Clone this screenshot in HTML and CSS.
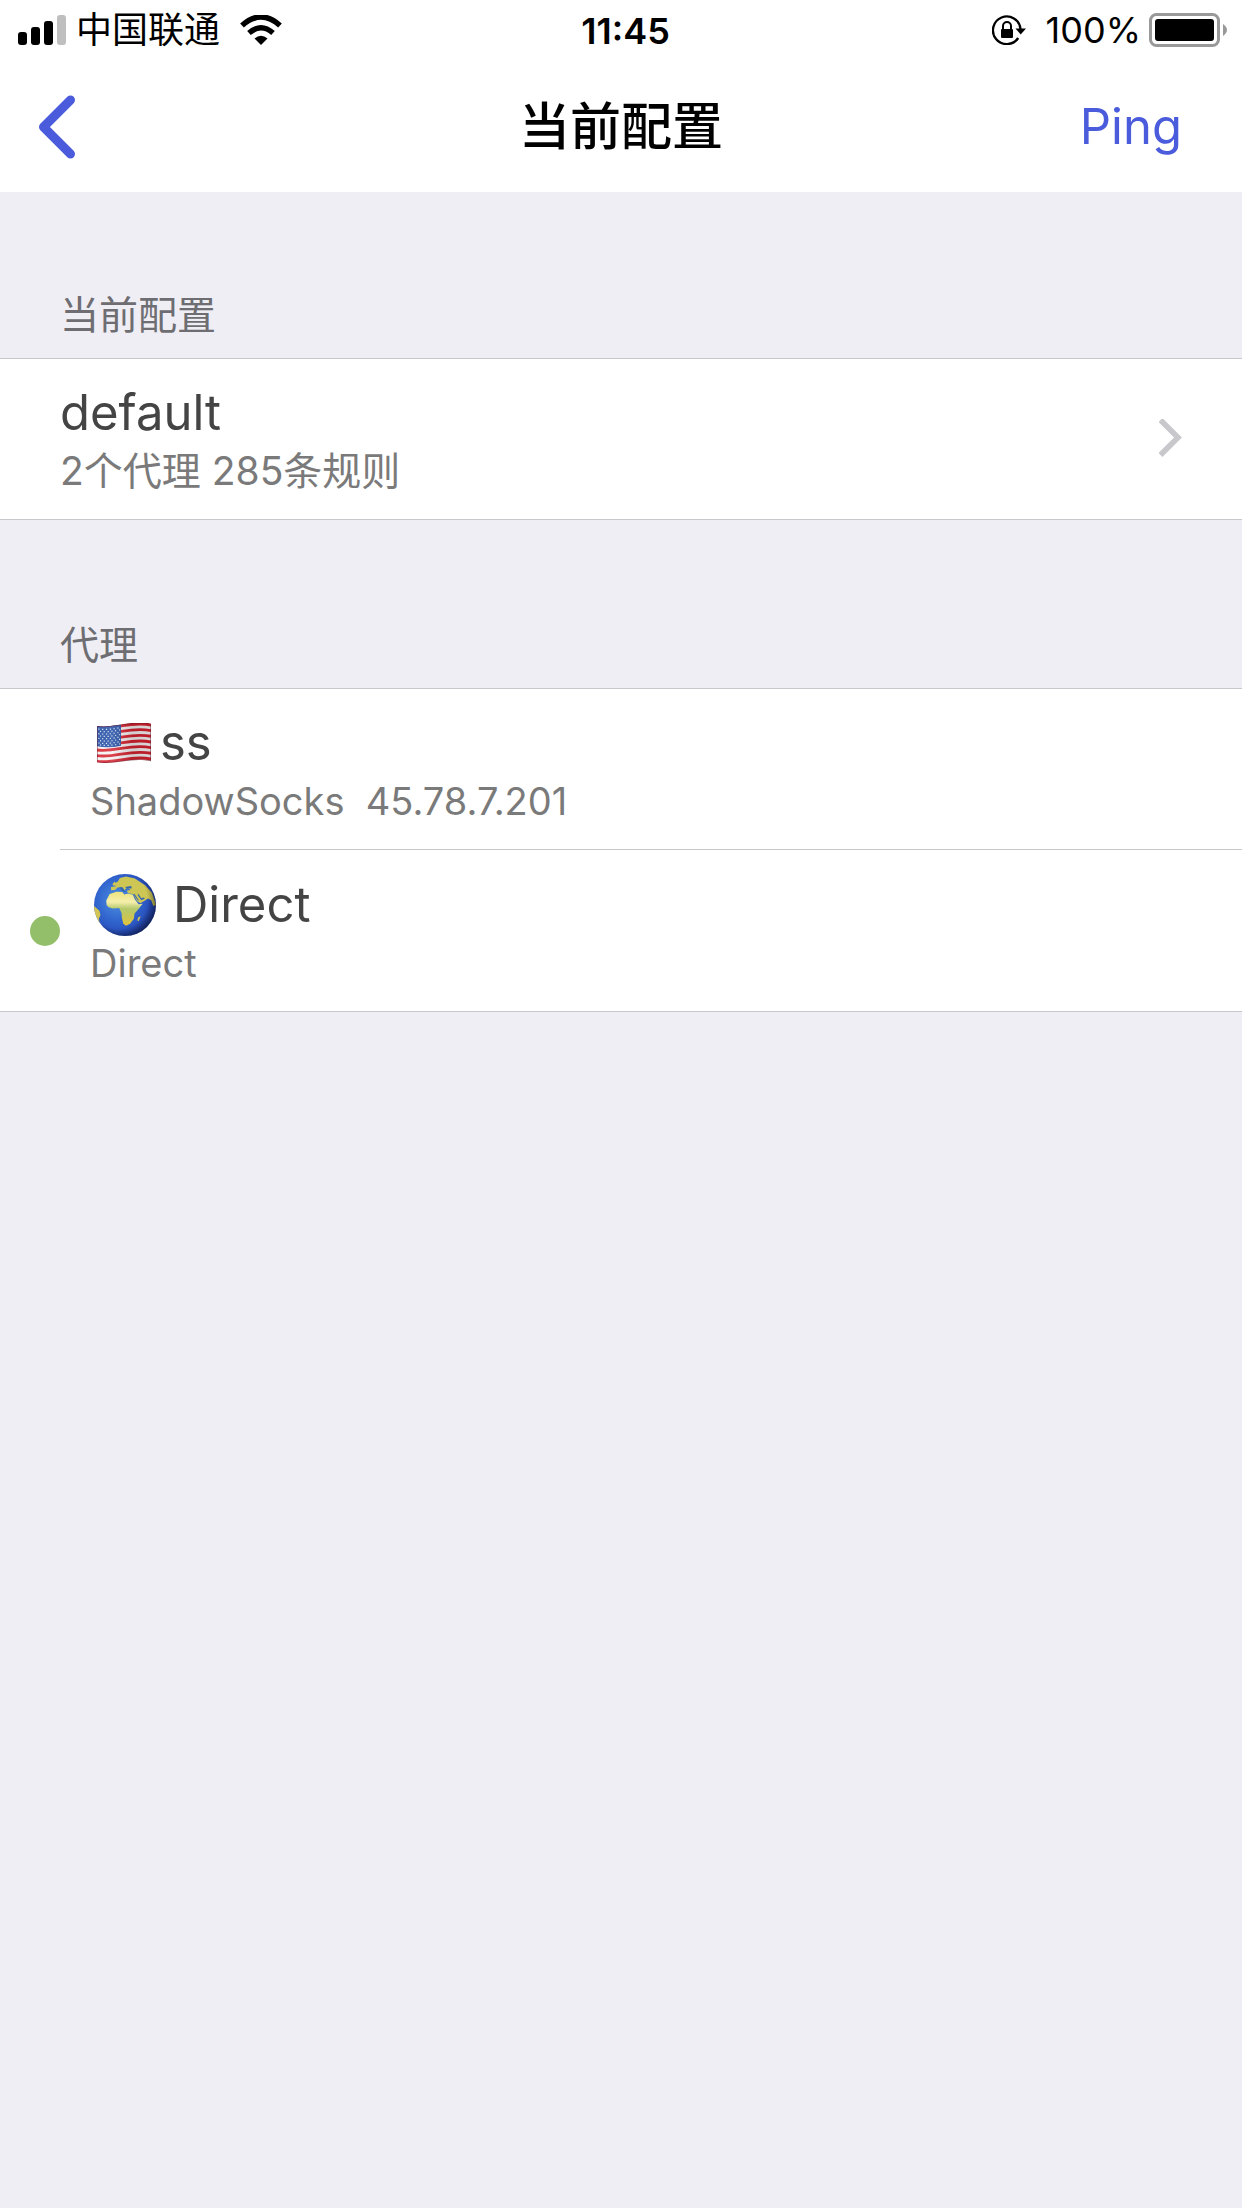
FILE: index.html
```html
<!DOCTYPE html>
<html lang="zh-CN">
<head>
  <meta charset="utf-8">
  <meta name="viewport" content="width=device-width, initial-scale=1">
  <title>当前配置</title>
  <link rel="stylesheet" href="styles.css">
</head>
<body>
  <header class="top">
    <div class="status">
      <div class="status-side">
        <svg class="signal" width="48" height="30" viewBox="0 0 48 30" aria-hidden="true">
          <rect x="0" y="17" width="9" height="13" rx="3"/>
          <rect x="13" y="12" width="9" height="18" rx="3"/>
          <rect x="26" y="6" width="9" height="24" rx="3"/>
          <rect x="39" y="0" width="9" height="30" rx="3" fill="#bfbfbf"/>
        </svg>
        <span class="carrier">中国联通</span>
        <svg class="wifi" width="42" height="30" viewBox="0 0 42 30" aria-hidden="true">
          <path d="M2 10.500Q21-6.500 40 10.500" fill="none" stroke="#000" stroke-width="5.500"/>
          <path d="M9 18Q21 7.500 33 18" fill="none" stroke="#000" stroke-width="5.500"/>
          <path d="M14.500 23.500Q21 18 27.500 23.500L21 30z"/>
        </svg>
      </div>
      <time class="clock">11:45</time>
      <div class="status-side status-right">
        <svg class="lock" width="34" height="30" viewBox="0 0 34 30" aria-hidden="true">
          <path d="M26.200 23A13.800 13.800 0 1 1 28.500 14" fill="none" stroke="#000" stroke-width="2.300"/>
          <path d="M23.500 13.500H34L28.700 19.500z"/>
          <rect x="9" y="14" width="12" height="9" rx="1"/>
          <path d="M11 15V11a4 4 0 0 1 8 0v4" fill="none" stroke="#000" stroke-width="2"/>
        </svg>
        <span>100%</span>
        <svg class="battery" width="78" height="34" viewBox="0 0 78 34" aria-hidden="true">
          <rect x="1.500" y="1.500" width="68" height="31" rx="6" fill="none" stroke="#999" stroke-width="3"/>
          <rect x="6" y="6" width="59" height="22" rx="3"/>
          <path d="M74 11q8 6 0 12z" fill="#999"/>
        </svg>
      </div>
    </div>
    <nav class="nav">
      <button class="back" type="button" aria-label="返回">
        <svg width="38" height="64" viewBox="0 0 38 64" aria-hidden="true">
          <path d="M32.500 5L5.500 32L32.500 59" fill="none" stroke="#4a5bdb" stroke-width="9" stroke-linecap="round" stroke-linejoin="round"/>
        </svg>
      </button>
      <h1 class="title">当前配置</h1>
      <button class="ping" type="button">Ping</button>
    </nav>
  </header>

  <main>
    <section class="group">
      <h2 class="heading">当前配置</h2>
      <div class="list">
        <a class="row config" href="#default">
          <span class="text">
            <span class="name">default</span>
            <span class="detail">2个代理 285条规则</span>
          </span>
          <svg width="23" height="40" viewBox="0 0 23 40" aria-hidden="true">
            <path d="M1.500 1L19 18.500L1.500 36" fill="none" stroke="#c7c7cc" stroke-width="5.500"/>
          </svg>
        </a>
      </div>
    </section>

    <section class="group">
      <h2 class="heading">代理</h2>
      <div class="list">
        <label class="row proxy">
          <input class="dot" type="radio" name="proxy">
          <span class="text">
            <span class="name">
              <svg class="flag" width="60" height="40" viewBox="0 0 180 120" aria-hidden="true">
                <defs>
                  <clipPath id="wave"><path d="M9 9C65 16 110-11 171 2V115C110 102 65 127 9 118z"/></clipPath>
                  <linearGradient id="fold">
                    <stop offset="0" stop-color="#fff" stop-opacity=".1"/>
                    <stop offset=".3" stop-color="#fff" stop-opacity=".15"/>
                    <stop offset=".65" stop-color="#000" stop-opacity=".15"/>
                    <stop offset="1" stop-color="#000" stop-opacity=".1"/>
                  </linearGradient>
                </defs>
                <g clip-path="url(#wave)">
                  <path d="M0 0H180V120H0z" fill="#f5f1f2"/>
                  <g fill="none" stroke="#d5222f" stroke-width="8.600">
                    <path d="M9 13C65 20 110-7 171 6"/>
                    <path d="M9 30C65 37 110 10 171 23"/>
                    <path d="M9 47C65 54 110 27 171 40"/>
                    <path d="M9 64C65 71 110 44 171 57"/>
                    <path d="M9 81C65 88 110 61 171 74"/>
                    <path d="M9 98C65 105 110 78 171 91"/>
                    <path d="M9 115C65 122 110 95 171 108"/>
                  </g>
                  <path d="M9 5H81V68Q45 76 9 70z" fill="#244fa5"/>
                  <g fill="none" stroke="#d9e2f5" stroke-width="3.500" stroke-dasharray="3.500 8">
                    <path d="M13 18Q45 22 80 13"/>
                    <path d="M18 25Q45 29 80 20"/>
                    <path d="M13 32Q45 36 80 27"/>
                    <path d="M18 39Q45 43 80 34"/>
                    <path d="M13 46Q45 50 80 41"/>
                    <path d="M18 53Q45 57 80 48"/>
                    <path d="M13 60Q45 64 80 55"/>
                    <path d="M18 66Q45 70 80 62"/>
                  </g>
                  <path d="M0 0H180V120H0z" fill="url(#fold)"/>
                  <path d="M9 9C65 16 110-11 171 2V115C110 102 65 127 9 118z" fill="none" stroke="#631421" stroke-opacity=".5" stroke-width="5"/>
                </g>
              </svg>
              <span>ss</span>
            </span>
            <span class="detail">ShadowSocks&nbsp; 45.78.7.201</span>
          </span>
        </label>
        <label class="row proxy">
          <input class="dot" type="radio" name="proxy" checked>
          <span class="text">
            <span class="name name-globe">
              <svg class="globe" width="62" height="62" viewBox="0 0 182 182" aria-hidden="true">
                <defs>
                  <radialGradient id="sea" cx=".38" cy=".42" r=".65">
                    <stop offset="0" stop-color="#4d91e0"/>
                    <stop offset=".5" stop-color="#3267cf"/>
                    <stop offset="1" stop-color="#2240b0"/>
                  </radialGradient>
                  <radialGradient id="shade" cx=".4" cy=".42" r=".66">
                    <stop offset=".7" stop-color="#000" stop-opacity="0"/>
                    <stop offset="1" stop-color="#000" stop-opacity=".6"/>
                  </radialGradient>
                  <linearGradient id="land" x1="0" y1="0" x2="0" y2="1">
                    <stop offset="0" stop-color="#ece27c"/>
                    <stop offset=".3" stop-color="#f5efad"/>
                    <stop offset=".5" stop-color="#b4c96c"/>
                    <stop offset="1" stop-color="#e0c23c"/>
                  </linearGradient>
                  <clipPath id="ball"><circle cx="91" cy="91" r="91"/></clipPath>
                </defs>
                <g clip-path="url(#ball)">
                  <path d="M0 0H182V182H0z" fill="url(#sea)"/>
                  <path d="M50 48V38L64 36L58 29L70 22L76 12L94 7L120 13L150 33L170 55L182 91L174 94L168 77L158 72L151 77L136 86L126 79L116 60L100 56L96 49L108 46L96 41L86 50L80 43L70 39L62 47z" fill="#cdc655"/>
                  <path d="M37 91L36 78L46 59L66 52L83 53L89 60L100 57L114 61L120 75L131 89L143 87L129 105L119 116L117 131L106 146L94 152L86 146L82 130L81 115L74 100L54 101L42 97z" fill="url(#land)"/>
                  <path d="M54 29L61 22L66 30L58 35zM0 94L16 108L19 120L14 132L18 149L9 148L0 115zM137 124L131 139L127 136L130 127z" fill="#d3c553"/>
                  <path d="M73 38L83 50L92 52L84 39M91 38L109 35L111 42L98 43zM116 60L129 78L132 78L119 59zM130 58L128 62L139 77L150 72L145 69L139 71z" fill="#3466ad"/>
                  <path d="M0 0H182V182H0z" fill="url(#shade)"/>
                </g>
              </svg>
              <span>Direct</span>
            </span>
            <span class="detail">Direct</span>
          </span>
        </label>
      </div>
    </section>
  </main>
</body>
</html>
```
FILE: styles.css
```css
* {
  box-sizing: border-box;
}

body {
  margin: 0;
  min-height: 100vh;
  background: #efeef4;
  color: #444;
  font-family: Inter, "Noto Sans CJK SC", sans-serif;
}

svg {
  display: block;
  flex: none;
}

button {
  padding: 0;
  border: 0;
  background: none;
  font: inherit;
}

.top {
  background: #fff;
  color: #000;
}

.status {
  display: flex;
  align-items: center;
  height: 60px;
  padding: 0 15px 0 18px;
  font-size: 36px;
  line-height: 62px;
}

.status-side {
  display: flex;
  flex: 1;
  align-items: center;
}

.status-right {
  justify-content: flex-end;
}

.carrier {
  margin: 0 20px 0 10px;
}

.clock {
  padding: 2px 0 0 6px;
  font-weight: 600;
}

.lock {
  margin-right: 20px;
}

.battery {
  margin-left: 8px;
}

.nav {
  display: grid;
  grid-template-columns: 1fr auto 1fr;
  align-items: center;
  height: 132px;
  padding: 2px 38px 0;
}

.back {
  justify-self: start;
}

.title {
  margin: 0;
  font-size: 51px;
  font-weight: 500;
  line-height: 72px;
}

.ping {
  justify-self: end;
  padding-right: 22px;
  color: #4a5bdb;
  font-size: 49px;
  line-height: 72px;
}

.group + .group {
  margin-top: 2px;
}

.heading {
  margin: 0;
  padding: 98px 60px 18px;
  color: #6d6d72;
  font-size: 39px;
  font-weight: 400;
  line-height: 50px;
}

.list {
  border: solid #c8c7cc;
  border-width: 1px 0;
  background: #fff;
}

.row {
  display: flex;
  align-items: center;
  padding: 24px 60px;
  color: inherit;
  text-decoration: none;
}

.config {
  justify-content: space-between;
}

.proxy {
  gap: 30px;
  padding-left: 30px;
}

.proxy + .proxy {
  padding-top: 26px;
  background: linear-gradient(#c8c7cc, #c8c7cc) 60px 0 / 100% 1px no-repeat;
}

.text {
  display: flex;
  flex-direction: column;
  gap: 4px;
}

.name {
  display: flex;
  align-items: center;
  gap: 6px;
  height: 60px;
  font-size: 49px;
  line-height: 60px;
}

.name-globe {
  gap: 17px;
}

.flag,
.globe {
  margin-left: 4px;
}

.detail {
  color: #7a7a7a;
  font-size: 39px;
  line-height: 48px;
}

.proxy .detail {
  font-size: 38px;
}

.dot {
  flex: none;
  width: 30px;
  height: 30px;
  margin: 0;
  border-radius: 50%;
  appearance: none;
}

.dot:checked {
  background: #93bf6b;
}
```
